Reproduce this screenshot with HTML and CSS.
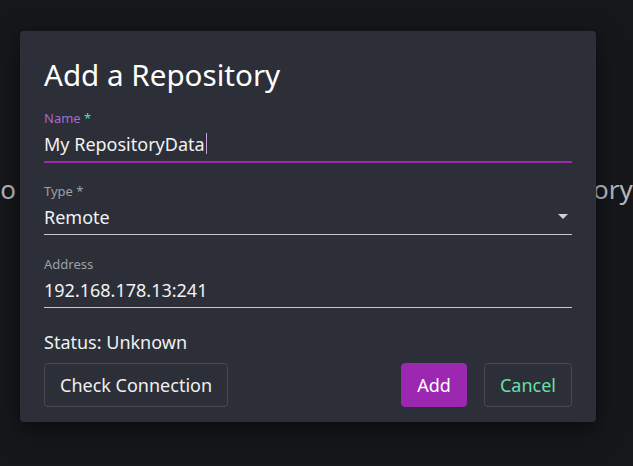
FILE: index.html
```html
<!DOCTYPE html>
<html>
<head>
<meta charset="utf-8">
<link rel="stylesheet" href="styles.css">
</head>
<body>
<div class="page">
  <div class="empty">Go to the Settings page and add your first repository</div>
</div>
<div class="overlay">
  <div class="dialog">
    <h1 class="title">Add a Repository</h1>
    <div class="field focused">
      <label class="label">Name <span class="req">*</span></label>
      <div class="control"><span class="value">My RepositoryData</span><span class="caret"></span></div>
    </div>
    <div class="field">
      <label class="label">Type *</label>
      <div class="control"><span class="value">Remote</span><span class="arrow"></span></div>
    </div>
    <div class="field">
      <label class="label">Address</label>
      <div class="control"><span class="value">192.168.178.13:241</span></div>
    </div>
    <div class="status">Status: Unknown</div>
    <div class="actions">
      <button class="btn outline">Check Connection</button>
      <div class="spacer"></div>
      <button class="btn primary">Add</button>
      <button class="btn outline cancel">Cancel</button>
    </div>
  </div>
</div>
</body>
</html>
```
FILE: styles.css
```css
html, body {
  margin: 0;
  padding: 0;
}
body {
  width: 633px;
  height: 466px;
  overflow: hidden;
  background: #16171b;
  font-family: "Noto Sans", "Open Sans", sans-serif;
  color: #f0f0f2;
  position: relative;
}
.page {
  height: 466px;
  display: flex;
  justify-content: center;
  padding-top: 171px;
  box-sizing: border-box;
}
.empty {
  white-space: nowrap;
  font-size: 26px;
  line-height: 36px;
  color: #b4b8bf;
  flex: none;
  word-spacing: 0.95px;
  padding-right: 19px;
}
.overlay {
  position: absolute;
  left: 20px;
  top: 31px;
}
.dialog {
  width: 576px;
  height: 391px;
  box-sizing: border-box;
  background: #2c2f37;
  border-radius: 4px;
  padding: 24px 24px 0 24px;
  box-shadow: 0 10px 30px rgba(0,0,0,0.35), 0 4px 10px rgba(0,0,0,0.2);
}
.title {
  margin: 0;
  font-weight: 400;
  font-size: 29.6px;
  line-height: 40px;
  color: #ffffff;
}
.field {
  margin-top: 15px;
}
.field + .field {
  margin-top: 21px;
}
.label {
  display: block;
  font-size: 13px;
  line-height: 16px;
  color: #9da1a8;
}
.focused .label {
  color: #a66ad2;
}
.req {
  color: #62d9a4;
}
.control {
  display: flex;
  align-items: center;
  height: 35px;
  border-bottom: 1px solid #c5c7cb;
  font-size: 18px;
  color: #f2f2f4;
  position: relative;
}
.focused .control {
  border-bottom-color: #9c27b0;
}
.focused .control::after {
  content: "";
  position: absolute;
  left: 0;
  right: 0;
  bottom: -2px;
  height: 1px;
  background: #9c27b0;
}
.caret {
  display: inline-block;
  width: 1px;
  height: 21px;
  background: #c9a3e0;
  margin-left: 1px;
}
.arrow {
  margin-left: auto;
  margin-right: 4px;
  width: 0;
  height: 0;
  border-left: 5px solid transparent;
  border-right: 5px solid transparent;
  border-top: 5px solid #cfd0d3;
}
.status {
  margin-top: 22px;
  font-size: 18px;
  line-height: 24px;
  color: #f0f0f2;
}
.actions {
  display: flex;
  margin-top: 9px;
  gap: 17px;
}
.spacer {
  flex: 1;
}
.btn {
  font-family: inherit;
  font-size: 18px;
  height: 44px;
  padding: 0 15px;
  border-radius: 4px;
  background: transparent;
  color: #f0f0f2;
  border: 1px solid #474a52;
  box-sizing: border-box;
}
.btn.primary {
  background: #9c27b0;
  border-color: #9c27b0;
  color: #ffffff;
}
.btn.cancel {
  color: #66e0a8;
}
```
